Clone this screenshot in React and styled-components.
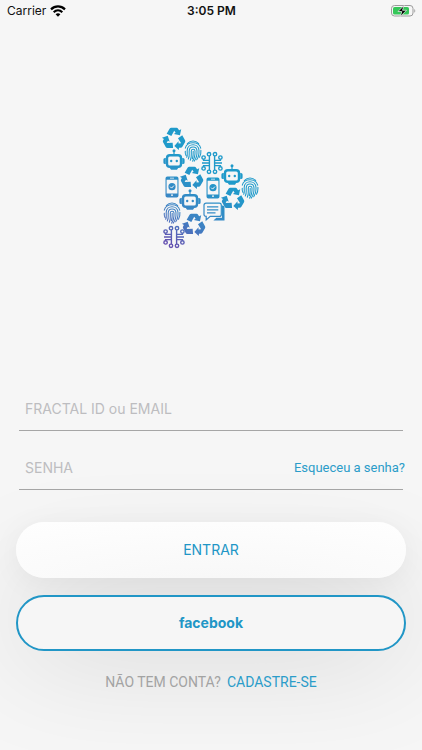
import React from "react";
import styled, { createGlobalStyle } from "styled-components";

const GlobalStyle = createGlobalStyle`
  *, *::before, *::after { box-sizing: border-box; }
  body {
    margin: 0;
    background: #f6f6f6;
    font-family: Inter, Roboto, sans-serif;
    color: #111;
  }
`;

const Screen = styled.div`
  display: flex;
  flex-direction: column;
  min-height: 100vh;
  overflow: hidden;
  background: #f6f6f6;
`;

const StatusBar = styled.header`
  display: grid;
  grid-template-columns: 1fr auto 1fr;
  align-items: center;
  height: 22px;
  padding: 0 6px 0 7px;
  font-size: 12px;
  line-height: 22px;
`;

const Carrier = styled.div`
  display: flex;
  align-items: center;
  gap: 4px;
`;

const Clock = styled.time`
  font-weight: 600;
`;

const BatterySlot = styled.div`
  display: flex;
  justify-content: flex-end;
`;

const Hero = styled.div`
  display: flex;
  justify-content: center;
  padding-top: 103px;
`;

const Form = styled.form`
  display: flex;
  flex-direction: column;
  padding: 137px 16px 0;
`;

const Field = styled.div`
  display: flex;
  align-items: center;
  height: 45px;
  margin: 0 3px 14px;
  padding: 0 0 0 6px;
  border-bottom: 1px solid #a6a6a6;
`;

const Input = styled.input`
  flex: 1;
  min-width: 0;
  height: 44px;
  padding: 0;
  border: 0;
  outline: 0;
  background: transparent;
  font: 400 14px/20px Inter, Roboto, sans-serif;
  color: #444;
  &::placeholder { color: #bdbdc0; opacity: 1; }
`;

const TextLink = styled.a`
  color: #2b9cc9;
  text-decoration: none;
`;

const ForgotLink = styled(TextLink)`
  margin-right: -2px;
  padding-top: 2px;
  font-family: Roboto, sans-serif;
  font-size: 13px;
  line-height: 20px;
`;

const PillButton = styled.button`
  height: 56px;
  border: 0;
  border-radius: 28px;
  font-family: inherit;
  font-size: 14px;
  line-height: 20px;
  color: #2196c6;
  cursor: pointer;
`;

const EnterButton = styled(PillButton)`
  margin: 18px 0 17px;
  background: radial-gradient(ellipse 90% 130% at 50% 115%, #f7f7f7, #fefefe);
  box-shadow: 0 68px 120px rgba(0, 0, 0, 0.18), 0 6px 30px rgba(0, 0, 0, 0.05);
`;

const FacebookButton = styled(PillButton)`
  position: relative;
  border: 2px solid #2196c6;
  background: #f6f6f6;
  font-weight: 700;
`;

const SignUp = styled.p`
  position: relative;
  display: flex;
  justify-content: center;
  gap: 6px;
  margin: 21px 0 0;
  font-family: Roboto, sans-serif;
  font-size: 14px;
  line-height: 20px;
  color: #a3a3a3;
`;

function WifiIcon() {
  return (
    <svg width="16" height="12" viewBox="0 0 16 12" fill="none" stroke="#000" strokeWidth="2.2" aria-hidden="true">
      <path d="M1 4.4C5 .4 11 .4 15 4.4" />
      <path d="M3.7 7.2c2.5-2.4 6.1-2.4 8.6 0" />
      <path d="M8 11.7 5.6 9.2c1.4-1.2 3.4-1.2 4.8 0Z" fill="#000" stroke="none" />
    </svg>
  );
}

function BatteryIcon() {
  return (
    <svg width="25" height="12" viewBox="0 0 25 12" role="img" aria-label="Charging">
      <rect x=".5" y=".5" width="21.5" height="10.5" rx="3" fill="none" stroke="#9b9b9b" />
      <rect x="2" y="2" width="16" height="7.5" rx="1.6" fill="#35c759" />
      <path d="M23.3 4v3.8c1.3-.5 1.3-3.3 0-3.8Z" fill="#9b9b9b" />
      <path d="m13 .5-6 6h3.8L9.3 11.5l6.2-6.2h-4Z" fill="#000" stroke="#f6f6f6" strokeWidth=".7" />
    </svg>
  );
}

const ARROW = "M-6.9-5-4.2-9.6Q-3.6-10.5-2.6-10.5H2.4Q3.4-10.5 4-9.5L4.8-8.2 6.8-9.2 5.6-3.6-.2-4.8 1.5-5.8.2-7.9-2.5-2.9Z";

function Recycle({ x, y }) {
  return (
    <g transform={`translate(${x} ${y + 1}) scale(1.06)`} fill="#fff">
      {[0, 120, 240].map((turn) => <path key={turn} d={ARROW} transform={`rotate(${turn})`} />)}
    </g>
  );
}

function Fingerprint({ x, y }) {
  return (
    <g transform={`translate(${x - 8.5} ${y - 11})`} fill="none" stroke="#fff" strokeWidth="1.05" strokeLinecap="round">
      <path d="M2.8 3.6C6 .1 11 .1 14.2 3.6" />
      <path d="M.8 8.2C2.6.9 14.4.9 16.2 8.2M16.4 10.3c.2 2.6-.2 5-1.4 7" />
      <path d="M.8 11.2c-.3 1.5.1 3.1.6 4.2M2.2 17.3c1.1-2.2.4-4.2.5-6.8.2-7.6 11.4-7.6 11.8 0 .2 4-.3 6.5-2.3 9.3" />
      <path d="M3.8 19c1.5-2.7.8-5.2.9-8.1.2-5.3 7.5-5.3 7.8 0 .2 4.3-.5 7.2-2.8 10.2" />
      <path d="M5.8 20.3c1.6-3.1.9-6.2 1-9.2.1-2.6 3.6-2.6 3.7 0 .2 4-.5 7.4-2.4 10" />
      <path d="M8.7 11.2c.1 3 0 5.3-.8 7.6" />
    </g>
  );
}

function Robot({ x, y }) {
  return (
    <g transform={`translate(${x - 11} ${y - 11})`}>
      <circle cx="11" cy="1.8" r="1.5" fill="#fff" />
      <path d="M11 2v4" stroke="#fff" strokeWidth="1.2" />
      <rect x="4" y="6.2" width="14" height="11.6" rx="2.8" fill="none" stroke="#fff" strokeWidth="2.4" />
      <path d="M2.8 9v6H2a1.6 1.6 0 0 1-1.6-1.6v-2.8A1.6 1.6 0 0 1 2 9ZM19.2 9v6h.8a1.6 1.6 0 0 0 1.6-1.6v-2.8A1.6 1.6 0 0 0 20 9ZM6.5 18.5h9L14 20.8H8Z" fill="#fff" />
      <circle cx="8.2" cy="12" r="1.2" fill="#fff" />
      <circle cx="13.8" cy="12" r="1.2" fill="#fff" />
    </g>
  );
}

const NODES = [[8, 2.2], [14, 2.2], [8, 19.8], [14, 19.8], [2.6, 5.6], [19.4, 5.6], [2.6, 16.4], [19.4, 16.4]];

function Circuit({ x, y }) {
  return (
    <g transform={`translate(${x - 11} ${y - 11})`} fill="none" stroke="#fff" strokeWidth="1.4">
      {NODES.map(([cx, cy]) => <circle key={`${cx}-${cy}`} cx={cx} cy={cy} r="1.7" />)}
      <path d="M8.4 4v14M13.6 4v14M1 11h7.4M13.6 11H21M2.6 7.2v1.2h5.8M2.6 14.8v-1.2h5.8M19.4 7.2v1.2h-5.8M19.4 14.8v-1.2h-5.8" />
    </g>
  );
}

function Phone({ x, y }) {
  return (
    <g transform={`translate(${x - 7} ${y - 11})`}>
      <path fillRule="evenodd" fill="#fff" d="M2.4.5h9.2a1.9 1.9 0 0 1 1.9 1.9v17.2a1.9 1.9 0 0 1-1.9 1.9H2.4a1.9 1.9 0 0 1-1.9-1.9V2.4A1.9 1.9 0 0 1 2.4.5ZM1.6 3.7v13.8h10.8V3.7ZM5 1.7v.8h4v-.8Zm1 16.9v1.2h2v-1.2Z" />
      <circle cx="7" cy="10.7" r="3.6" fill="#fff" />
      <path d="m5.2 10.7 1.4 1.4 2.3-2.5" fill="none" stroke="#000" />
    </g>
  );
}

function Chat({ x, y }) {
  return (
    <g transform={`translate(${x - 11} ${y - 10})`}>
      <path d="M19 3.5h.7a1.8 1.8 0 0 1 1.8 1.8v13.2H10.4l3-2.7H19Z" fill="#fff" />
      <path d="M3 1.2h13.3a2 2 0 0 1 2 2v9.2a2 2 0 0 1-2 2H7.2l-4 3.6v-3.6H3a2 2 0 0 1-2-2V3.2a2 2 0 0 1 2-2Z" fill="#000" stroke="#fff" strokeWidth="1.2" />
      <path d="M4 4.8h11.3M4 7.8h11.3M4 10.8h8.5" stroke="#fff" strokeWidth="1.3" />
    </g>
  );
}

function Logo() {
  return (
    <svg width="102" height="124" viewBox="0 0 102 124" role="img" aria-label="Fractal">
      <defs>
        <linearGradient id="logoTint" gradientUnits="userSpaceOnUse" x1="52" y1="50" x2="10" y2="120">
          <stop offset="0" stopColor="#1f9aca" />
          <stop offset=".6" stopColor="#3d82c3" />
          <stop offset="1" stopColor="#6550b0" />
        </linearGradient>
        <mask id="logoShapes" maskUnits="userSpaceOnUse" x="0" y="0" width="102" height="124">
          <Recycle x={14} y={13} />
          <Recycle x={32} y={52} />
          <Recycle x={73} y={73} />
          <Recycle x={34} y={99} />
          <Fingerprint x={33} y={26} />
          <Fingerprint x={90} y={63} />
          <Fingerprint x={12} y={88} />
          <Robot x={14} y={35} />
          <Robot x={72} y={50} />
          <Robot x={30} y={75} />
          <Circuit x={52} y={38} />
          <Circuit x={14} y={112} />
          <Phone x={12} y={62} />
          <Phone x={53} y={63} />
          <Chat x={54} y={87} />
        </mask>
      </defs>
      <rect width="102" height="124" fill="url(#logoTint)" mask="url(#logoShapes)" />
    </svg>
  );
}

export default function App() {
  return (
    <Screen>
      <GlobalStyle />
      <StatusBar>
        <Carrier>Carrier <WifiIcon /></Carrier>
        <Clock>3:05 PM</Clock>
        <BatterySlot><BatteryIcon /></BatterySlot>
      </StatusBar>
      <main>
        <Hero><Logo /></Hero>
        <Form onSubmit={(e) => e.preventDefault()}>
          <Field>
            <Input type="text" aria-label="FRACTAL ID ou EMAIL" placeholder="FRACTAL ID ou EMAIL" autoComplete="username" />
          </Field>
          <Field>
            <Input type="password" aria-label="SENHA" placeholder="SENHA" autoComplete="current-password" />
            <ForgotLink href="#senha">Esqueceu a senha?</ForgotLink>
          </Field>
          <EnterButton type="submit">ENTRAR</EnterButton>
          <FacebookButton type="button">facebook</FacebookButton>
          <SignUp>
            NÃO TEM CONTA? <TextLink href="#cadastro">CADASTRE-SE</TextLink>
          </SignUp>
        </Form>
      </main>
    </Screen>
  );
}
